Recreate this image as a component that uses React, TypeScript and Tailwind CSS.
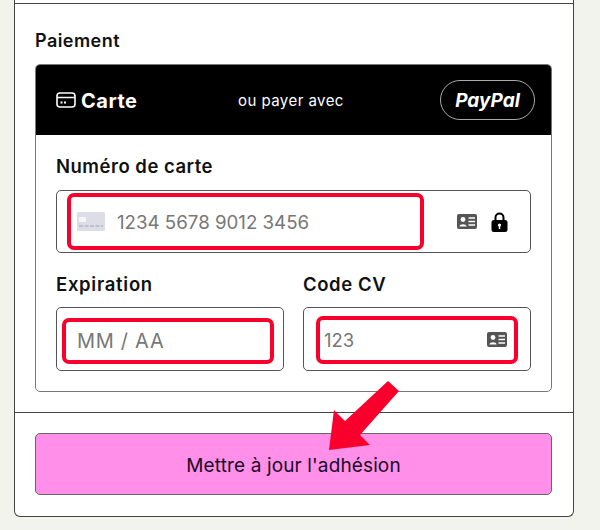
const font = { fontFamily: "Inter, 'Liberation Sans', sans-serif" };

function CardIcon() {
  return (
    <svg width="20" height="16" viewBox="0 0 20 16" fill="none">
      <rect x="1" y="1" width="18" height="14" rx="3" stroke="white" strokeWidth="1.6" />
      <path d="M1 5.5H19" stroke="white" strokeWidth="1.6" />
      <path d="M4.5 10.5H6.5M8 10.5H10" stroke="white" strokeWidth="1.8" />
    </svg>
  );
}

function IdIcon() {
  return (
    <svg width="20" height="15" viewBox="0 0 20 15">
      <rect width="20" height="15" rx="2" fill="#555" />
      <circle cx="6" cy="5.5" r="2.4" fill="white" />
      <path d="M2.5 12.5C2.5 9.5 9.5 9.5 9.5 12.5Z" fill="white" />
      <path d="M11.5 4H18M11.5 7.5H18M11.5 11H18" stroke="white" strokeWidth="1.5" />
    </svg>
  );
}

function LockIcon() {
  return (
    <svg width="17" height="20" viewBox="0 0 17 20">
      <path d="M4.5 9V5.5a4 4 0 0 1 8 0V9" fill="none" stroke="black" strokeWidth="2" />
      <rect x="0.5" y="8" width="16" height="12" rx="2.5" fill="black" />
      <circle cx="8.5" cy="13" r="1.6" fill="white" />
      <rect x="7.8" y="13" width="1.4" height="4" fill="white" />
    </svg>
  );
}

function ChipIcon() {
  return (
    <svg width="28" height="19" viewBox="0 0 28 19">
      <rect width="28" height="19" rx="1.5" fill="#dcdde6" />
      <rect x="2" y="5" width="7" height="5" fill="#f5f5f8" />
      <path d="M2 14H26" stroke="#b4b6c4" strokeWidth="1.5" strokeDasharray="4 1.5" />
    </svg>
  );
}

function Marker({ className }: { className: string }) {
  return <div className={`absolute rounded-[7px] border-[4px] border-[#f8002b] ${className}`} />;
}

export default function App() {
  return (
    <div className="h-[530px] w-[600px] overflow-hidden bg-[#f3f3ee] pl-[14px] text-black" style={font}>
      <div className="relative w-[560px] rounded-b-[6px] border-x border-b border-[#444] bg-white pt-[3px]">
        <section className="border-t border-[#444] px-[20px] pt-[25px] pb-[20px]">
          <h2 className="h-[35px] text-[18px] leading-[24px] font-semibold tracking-[0.45px] text-[#111]">Paiement</h2>

          <div className="h-[328px] w-[517px] overflow-hidden rounded-[5px] border border-[#777]">
            <div className="flex h-[70px] items-center bg-black pr-[16px] pl-[20px] text-white">
              <CardIcon />
              <span className="ml-[5px] w-[157px] pt-[2px] text-[20px] font-bold tracking-[0.5px]">Carte</span>
              <span className="pt-[2px] text-[15px] tracking-[0.45px]">ou payer avec</span>
              <span className="ml-auto flex h-[40px] w-[95px] items-center justify-center rounded-full border border-[#aaa] pt-[2px] text-[19px] font-bold italic">
                PayPal
              </span>
            </div>

            <div className="px-[20px] pt-[20px]">
              <label className="block h-[35px] text-[18.5px] leading-[22px] font-semibold tracking-[0.5px] text-[#111]">Numéro de carte</label>
              <div className="relative flex h-[63px] items-center rounded-[5px] border border-[#555] pr-[22px] pl-[20px]">
                <Marker className="top-[2px] left-[10px] h-[57px] w-[357px]" />
                <ChipIcon />
                <span className="ml-[12px] pt-[3px] text-[18.7px] text-[#777]">1234 5678 9012 3456</span>
                <span className="ml-auto flex items-center gap-[14px]">
                  <IdIcon />
                  <LockIcon />
                </span>
              </div>

              <div className="mt-[20px] grid grid-cols-[228px_228px] gap-x-[19px]">
                <div>
                  <label className="block h-[34px] text-[18.5px] leading-[22px] font-semibold tracking-[0.7px] text-[#111]">Expiration</label>
                  <div className="relative flex h-[64px] items-center rounded-[5px] border border-[#555] pl-[20px]">
                    <Marker className="top-[10px] left-[5px] h-[46px] w-[212px]" />
                    <span className="pt-[3px] text-[20px] tracking-[0.7px] text-[#777]">MM / AA</span>
                  </div>
                </div>
                <div>
                  <label className="block h-[34px] text-[18.5px] leading-[22px] font-semibold tracking-[0.6px] text-[#111]">Code CV</label>
                  <div className="relative flex h-[64px] items-center rounded-[5px] border border-[#555] pr-[23px] pl-[20px]">
                    <Marker className="top-[8px] left-[12px] h-[48px] w-[202px]" />
                    <span className="pt-[3px] text-[18.5px] text-[#777]">123</span>
                    <span className="ml-auto">
                      <IdIcon />
                    </span>
                  </div>
                </div>
              </div>
            </div>
          </div>
        </section>

        <section className="border-t border-[#444] px-[20px] pt-[20px] pb-[21px]">
          <button className="flex h-[62px] w-[517px] items-center justify-center rounded-[5px] border border-[#666] bg-[#ff8fe8] pt-[4px] text-[19px] tracking-[0.13px] text-[#1a0a2a]">
            Mettre à jour l'adhésion
          </button>
        </section>

        <svg className="absolute top-[378px] left-[314px]" width="72" height="74" viewBox="0 0 72 74">
          <path d="M59 3 L70 13 L31 57 L41 67 L0 72 L5 32 L16 43 Z" fill="#f8002b" />
        </svg>
      </div>
    </div>
  );
}
